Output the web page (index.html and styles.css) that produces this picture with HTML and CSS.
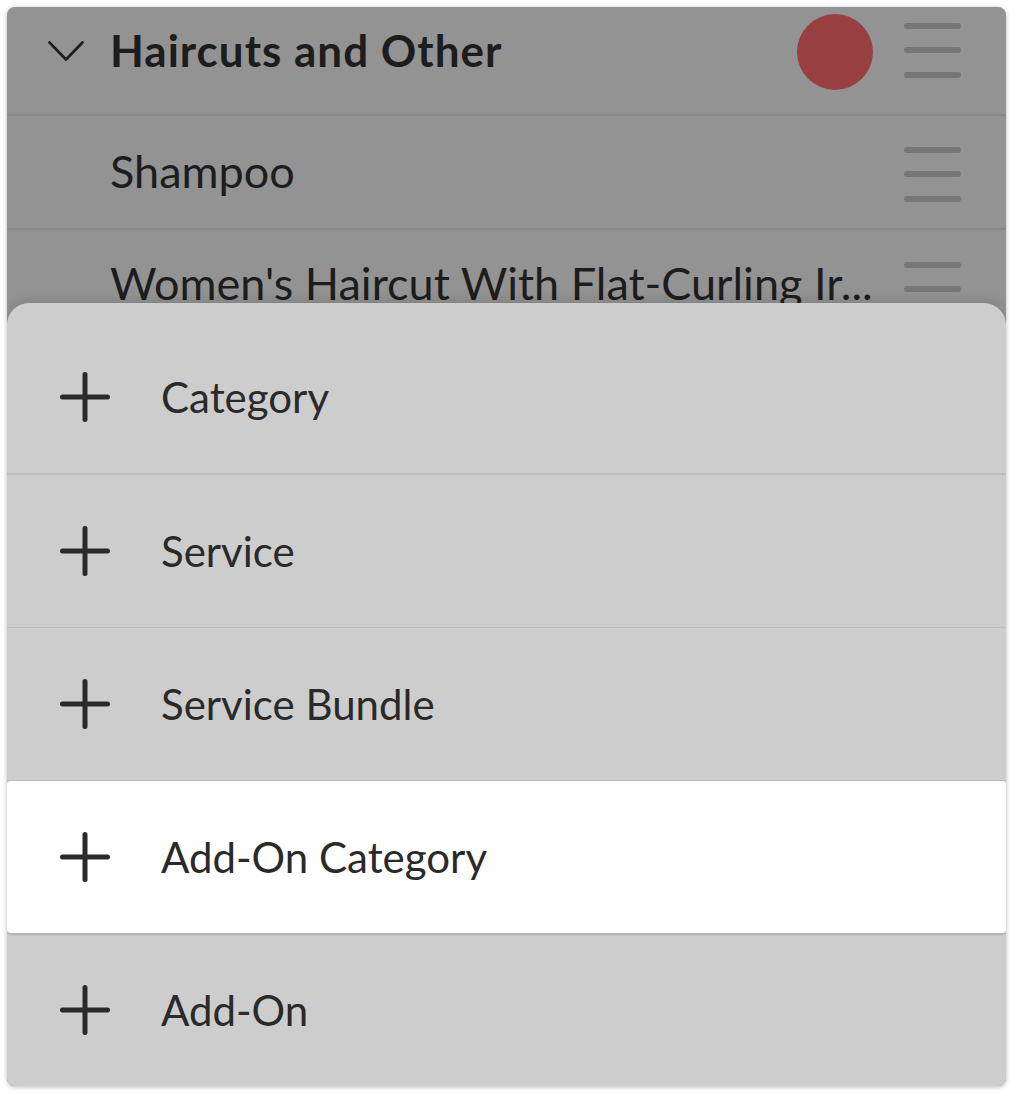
FILE: index.html
```html
<!DOCTYPE html>
<html>
<head>
<meta charset="utf-8">
<link rel="stylesheet" href="styles.css">
</head>
<body>
<div class="frame">
  <div class="list">
    <div class="row row-head">
      <svg class="chevron" viewBox="0 0 36 21" width="36" height="21"><path d="M1.5 1.5 L18 18.5 L34.5 1.5" fill="none" stroke="#1c1c1c" stroke-width="2.6" stroke-linecap="round" stroke-linejoin="round"/></svg>
      <span class="title">Haircuts and Other</span>
      <span class="dot"></span>
      <span class="handle"><i></i><i></i><i></i></span>
    </div>
    <div class="row row-item">
      <span class="name">Shampoo</span>
      <span class="handle"><i></i><i></i><i></i></span>
    </div>
    <div class="row row-item">
      <span class="name">Women's Haircut With Flat-Curling Ir...</span>
      <span class="handle"><i></i><i></i><i></i></span>
    </div>
  </div>

  <div class="sheet">
    <div class="opt first">
      <svg class="plus" viewBox="0 0 50 50" width="50" height="50"><path d="M25 2.5 V47.5 M2.5 25 H47.5" stroke="#2a2a2a" stroke-width="5" stroke-linecap="round"/></svg>
      <span class="label">Category</span>
    </div>
    <div class="opt">
      <svg class="plus" viewBox="0 0 50 50" width="50" height="50"><path d="M25 2.5 V47.5 M2.5 25 H47.5" stroke="#2a2a2a" stroke-width="5" stroke-linecap="round"/></svg>
      <span class="label">Service</span>
    </div>
    <div class="opt">
      <svg class="plus" viewBox="0 0 50 50" width="50" height="50"><path d="M25 2.5 V47.5 M2.5 25 H47.5" stroke="#2a2a2a" stroke-width="5" stroke-linecap="round"/></svg>
      <span class="label">Service Bundle</span>
    </div>
    <div class="opt active">
      <svg class="plus" viewBox="0 0 50 50" width="50" height="50"><path d="M25 2.5 V47.5 M2.5 25 H47.5" stroke="#2a2a2a" stroke-width="5" stroke-linecap="round"/></svg>
      <span class="label">Add-On Category</span>
    </div>
    <div class="opt last">
      <svg class="plus" viewBox="0 0 50 50" width="50" height="50"><path d="M25 2.5 V47.5 M2.5 25 H47.5" stroke="#2a2a2a" stroke-width="5" stroke-linecap="round"/></svg>
      <span class="label">Add-On</span>
    </div>
  </div>
</div>
</body>
</html>
```

FILE: styles.css
```css
html, body {
  margin: 0;
  padding: 0;
  background: #ffffff;
}
body {
  padding: 7px 9px 8px 7px;
  font-family: "Lato", "Liberation Sans", sans-serif;
}
.frame {
  position: relative;
  width: 999px;
  height: 1079px;
  border-radius: 8px;
  overflow: hidden;
  background: #939393;
  box-shadow: 0 1px 5px rgba(0, 0, 0, 0.28);
}
.list {
  display: flex;
  flex-direction: column;
}
.row {
  display: flex;
  align-items: center;
  border-bottom: 2px solid #878787;
  color: #1d1d1d;
  box-sizing: border-box;
}
.row-head {
  height: 109px;
  padding-bottom: 21px;
}
.row-item {
  height: 114px;
  padding-top: 4px;
}
.row-item + .row-item {
  padding-top: 6px;
}
.chevron {
  margin-left: 41px;
  margin-right: 26px;
  margin-top: 2px;
  flex: none;
}
.title {
  font-weight: 700;
  font-size: 44px;
  letter-spacing: 1px;
  flex: 1;
}
.name {
  margin-left: 103px;
  margin-top: -6px;
  font-size: 45px;
  flex: 1;
  white-space: nowrap;
  overflow: hidden;
}
.row-item + .row-item .name {
  margin-top: -12px;
}
.dot {
  width: 76px;
  height: 76px;
  border-radius: 50%;
  background: #983f42;
  margin-right: 31px;
  margin-top: 4px;
  flex: none;
}
.handle {
  width: 57px;
  display: flex;
  flex-direction: column;
  gap: 18.5px;
  margin-right: 45px;
  flex: none;
}
.handle i {
  display: block;
  height: 6px;
  border-radius: 3px;
  background: #767676;
}
.sheet {
  position: absolute;
  left: 0;
  right: 0;
  top: 296px;
  bottom: 0;
  background: #cdcdcd;
  border-radius: 22px 22px 0 0;
  padding-top: 18px;
  box-shadow: 0 -3px 12px rgba(0, 0, 0, 0.12);
  display: flex;
  flex-direction: column;
}
.opt {
  height: 152px;
  display: flex;
  align-items: center;
  padding-left: 53px;
  gap: 51px;
  border-bottom: 1px solid #bdbdbd;
  color: #2a2a2a;
  flex: none;
}
.opt.first {
  border-bottom: 2px solid #bdbdbd;
}
.opt.last {
  border-bottom: none;
}
.opt.active {
  background: #ffffff;
  border-radius: 4px;
  border-bottom-color: #b5b5b5;
  box-shadow: 0 1px 2px rgba(0, 0, 0, 0.15);
  position: relative;
}
.plus {
  flex: none;
}
.label {
  font-size: 42px;
}
```
